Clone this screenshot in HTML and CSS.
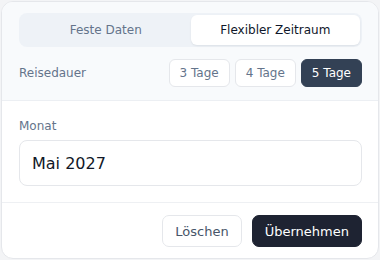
FILE: index.html
```html
<!DOCTYPE html>
<html lang="de">
<head>
<meta charset="utf-8">
<link rel="stylesheet" href="styles.css">
</head>
<body>
<div class="card">
  <div class="top">
    <div class="segment">
      <button class="seg">Feste Daten</button>
      <button class="seg active">Flexibler Zeitraum</button>
    </div>
    <div class="duration">
      <span class="label">Reisedauer</span>
      <div class="chips">
        <button class="chip">3 Tage</button>
        <button class="chip">4 Tage</button>
        <button class="chip selected">5 Tage</button>
      </div>
    </div>
  </div>
  <div class="middle">
    <div class="label small">Monat</div>
    <div class="input">Mai 2027</div>
  </div>
  <div class="footer">
    <button class="btn ghost">Löschen</button>
    <button class="btn primary">Übernehmen</button>
  </div>
</div>
</body>
</html>
```

FILE: styles.css
```css
* { box-sizing: border-box; }
html, body { margin: 0; padding: 0; background: #f3f4f6; }
body { padding: 1px; font-family: "DejaVu Sans", sans-serif; }
.card {
  width: 378px;
  height: 258px;
  background: #fff;
  border: 1px solid #e5e7eb;
  border-radius: 12px;
  overflow: hidden;
  display: flex;
  flex-direction: column;
}
button { font-family: inherit; cursor: pointer; }
.top {
  background: #f8fafc;
  border-bottom: 1px solid #eceff3;
  padding: 11px 16px 13px 17px;
}
.segment {
  display: grid;
  grid-template-columns: 1fr 1fr;
  background: #eef2f7;
  border-radius: 8px;
  padding: 2px;
  height: 34px;
}
.seg {
  border: none;
  background: transparent;
  font-size: 12px;
  color: #64748b;
  border-radius: 6px;
}
.seg.active {
  background: #fff;
  color: #0f172a;
  box-shadow: 0 1px 2px rgba(15,23,42,0.08);
}
.duration {
  display: flex;
  align-items: center;
  justify-content: space-between;
  margin-top: 12px;
}
.label { font-size: 12px; color: #64748b; }
.chips { display: flex; gap: 5px; }
.chip {
  height: 28px;
  padding: 0 10px;
  border: 1px solid #e5e7eb;
  background: #fff;
  border-radius: 6px;
  font-size: 12px;
  color: #64748b;
}
.chip.selected { background: #334155; border-color: #334155; color: #fff; }
.middle {
  padding: 18px 16px 16px 17px;
  border-bottom: 1px solid #eef0f3;
}
.small { font-size: 12px; }
.input {
  margin-top: 7px;
  height: 46px;
  border: 1px solid #e5e7eb;
  border-radius: 8px;
  display: flex;
  align-items: center;
  padding: 0 12px;
  font-size: 16px;
  color: #111827;
}
.footer {
  display: flex;
  justify-content: flex-end;
  gap: 10px;
  padding: 12px 16px 0 16px;
}
.btn {
  height: 32px;
  border-radius: 7px;
  font-size: 13px;
  padding: 0 12px;
}
.ghost { background: #fff; border: 1px solid #e5e7eb; color: #475569; }
.primary { background: #1e2332; border: 1px solid #1e2332; color: #fff; }
```
